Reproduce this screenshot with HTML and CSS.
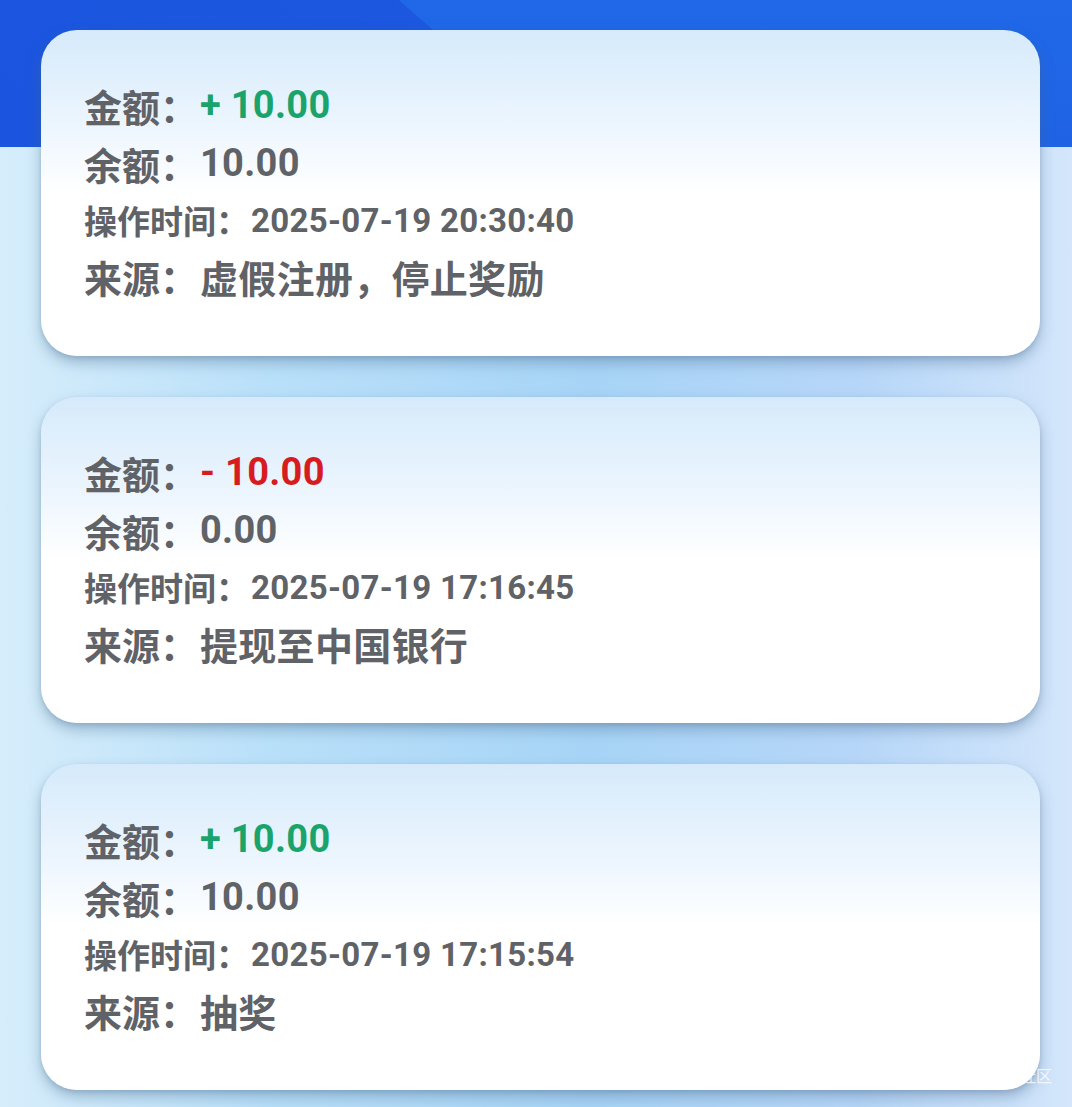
FILE: index.html
```html
<!DOCTYPE html>
<html lang="zh-CN">
<head>
    <meta charset="UTF-8">
    <meta name="viewport" content="width=device-width, initial-scale=1.0">
    <title>余额明细</title>
    <link rel="stylesheet" href="styles.css">
</head>
<body>
    <div class="page">
        <div class="record-list">
            <div class="record-card">
                <div class="row row-big"><span class="label">金额：</span><span class="amount plus">+ 10.00</span></div>
                <div class="row row-big"><span class="label">余额：</span><span class="value">10.00</span></div>
                <div class="row row-small"><span class="label">操作时间：</span><span class="value">2025-07-19 20:30:40</span></div>
                <div class="row row-big"><span class="label">来源：</span><span class="value">虚假注册，停止奖励</span></div>
            </div>

            <div class="record-card">
                <div class="row row-big"><span class="label">金额：</span><span class="amount minus">- 10.00</span></div>
                <div class="row row-big"><span class="label">余额：</span><span class="value">0.00</span></div>
                <div class="row row-small"><span class="label">操作时间：</span><span class="value">2025-07-19 17:16:45</span></div>
                <div class="row row-big"><span class="label">来源：</span><span class="value">提现至中国银行</span></div>
            </div>

            <div class="record-card">
                <div class="row row-big"><span class="label">金额：</span><span class="amount plus">+ 10.00</span></div>
                <div class="row row-big"><span class="label">余额：</span><span class="value">10.00</span></div>
                <div class="row row-small"><span class="label">操作时间：</span><span class="value">2025-07-19 17:15:54</span></div>
                <div class="row row-big"><span class="label">来源：</span><span class="value">抽奖</span></div>
            </div>
        </div>

        <span class="watermark">社区</span>
    </div>
</body>
</html>
```

FILE: styles.css
```css
* {
    margin: 0;
    padding: 0;
    box-sizing: border-box;
}

body {
    font-family: Roboto, "Noto Sans CJK SC", sans-serif;
    color: #606367;
    overflow: hidden;
}

.page {
    position: relative;
    width: 1072px;
    height: 1107px;
    background:
        linear-gradient(41deg, #1b55df 0, #1c57e0 372px, rgba(0, 0, 0, 0) 373px) top left / 100% 147px no-repeat,
        linear-gradient(#2068e8, #1f63e4) top left / 100% 147px no-repeat,
        linear-gradient(90deg, #d6edfb 0%, #b9e0f9 25%, #a7d4f6 55%, #b6d6f8 80%, #d3e6fb 100%);
}

.record-list {
    display: flex;
    flex-direction: column;
    gap: 41px;
    padding: 30px 32px 0 41px;
}

.record-card {
    height: 326px;
    border-radius: 36px;
    padding: 46px 43px 52px;
    background: linear-gradient(180deg, #d6eafb 0%, #edf6fe 30%, #ffffff 50%, #ffffff 100%);
    box-shadow: 0 7px 14px rgba(70, 105, 140, 0.38), 0 2px 4px rgba(70, 105, 140, 0.2);
}

.row {
    display: flex;
    align-items: center;
    font-weight: 700;
    white-space: nowrap;
}

.row-big {
    height: 58px;
    font-size: 38px;
}

.row-small {
    height: 56px;
    font-size: 33px;
}

.row:last-child {
    height: 56px;
}

.label {
    color: #5f6266;
}

.value,
.amount {
    margin-left: 2px;
    letter-spacing: 0.3px;
}

.value {
    color: #5f6266;
}

.amount.plus {
    color: #1ba36c;
}

.amount.minus {
    color: #d61c1f;
}

.watermark {
    position: absolute;
    right: 20px;
    bottom: 20px;
    font-size: 16px;
    color: rgba(255, 255, 255, 0.75);
    font-family: "Noto Sans CJK SC", sans-serif;
}
```
